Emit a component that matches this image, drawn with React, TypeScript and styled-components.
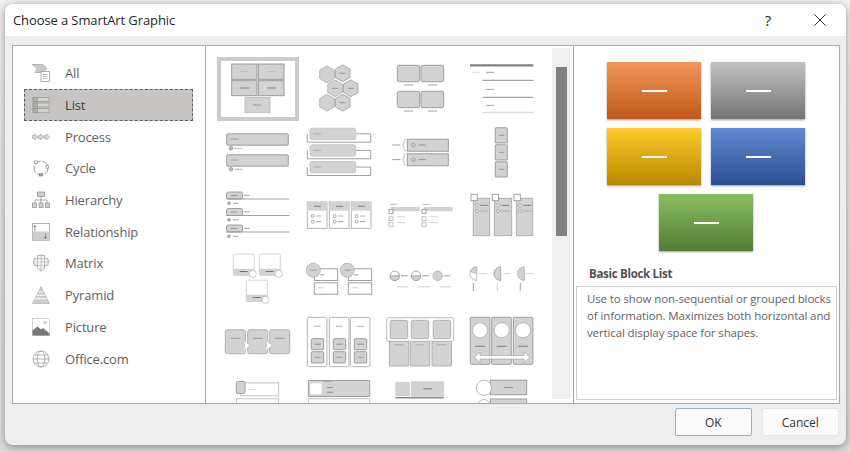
import React from 'react';
import styled, { createGlobalStyle } from 'styled-components';

const FONT = `"Open Sans", "Noto Sans", "Liberation Sans", sans-serif`;
const FILL = '#d2d2d2';
const LINE = '#949494';
const SOFT = '#cccccc';

const GlobalStyle = createGlobalStyle`
  html, body { margin: 0; padding: 0; height: 100%; background: #e6e6e6; }
  #root { height: 100%; }
`;

const Page = styled.div`
  box-sizing: border-box;
  width: 850px;
  height: 452px;
  padding: 4px 4px 7px 5px;
  overflow: hidden;
  background: linear-gradient(#f0f0f0, #dcdcdc);
  font-family: ${FONT};
`;

const Dialog = styled.div`
  display: flex;
  flex-direction: column;
  height: 100%;
  border-radius: 8px;
  background: #eeeeee;
  box-shadow: 0 2px 8px rgba(0, 0, 0, 0.4);
  overflow: hidden;
`;

const TitleBar = styled.div`
  flex: none;
  display: flex;
  align-items: center;
  height: 32px;
  padding-left: 8px;
  background: #ffffff;
`;

const Title = styled.div`
  flex: 1;
  font-size: 13px;
  letter-spacing: -0.1px;
  color: #262626;
`;

const TitleButton = styled.div`
  display: flex;
  align-items: center;
  justify-content: center;
  width: 26px;
  height: 32px;
  margin-right: 26px;
  font-size: 15px;
  color: #262626;
  &:last-child { margin-right: 13px; }
`;

const Panels = styled.div`
  flex: none;
  display: flex;
  box-sizing: border-box;
  height: 359px;
  margin: 9px 6px 0 7px;
  border: 1px solid #a9a9ad;
  background: #ffffff;
`;

const Sidebar = styled.div`
  flex: none;
  box-sizing: border-box;
  width: 193px;
  padding: 11.5px 12px 0 11px;
  border-right: 1px solid #a9a9ad;
`;

const Category = styled.div<{ $active?: boolean }>`
  display: flex;
  align-items: center;
  box-sizing: border-box;
  height: 31.7px;
  padding-left: 7px;
  gap: 15px;
  font-size: 13px;
  letter-spacing: -0.15px;
  color: ${(p) => (p.$active ? '#404040' : '#606060')};
  background: ${(p) => (p.$active ? '#c6c5c3' : 'transparent')};
  border: 1px dashed ${(p) => (p.$active ? '#5f5f5f' : 'transparent')};
`;

const Gallery = styled.div`
  flex: none;
  display: flex;
  box-sizing: border-box;
  width: 368px;
  border-right: 1px solid #a9a9ad;
`;

const GridClip = styled.div`
  flex: 1;
  overflow: hidden;
  padding: 11px 0 0 11px;
`;

const ThumbGrid = styled.div`
  display: grid;
  grid-template-columns: repeat(4, 81px);
  grid-auto-rows: 63.5px;
`;

const Thumb = styled.svg<{ $selected?: boolean }>`
  display: block;
  width: 82px;
  height: 63.5px;
  box-sizing: border-box;
  ${(p) => p.$selected && 'outline: 4px solid #cfcbc8; outline-offset: -4px;'}
`;

const ScrollTrack = styled.div`
  flex: none;
  width: 19px;
  margin: 2px 2px 4px 0;
  background: #f0f0f0;
`;

const ScrollThumb = styled.div`
  width: 11px;
  height: 169px;
  margin: 19px 0 0 4px;
  background: #808080;
`;

const Detail = styled.div`
  flex: 1;
  display: flex;
  flex-direction: column;
  min-width: 0;
`;

const Preview = styled.div`
  flex: none;
  display: flex;
  flex-wrap: wrap;
  justify-content: center;
  gap: 9px 10px;
  width: 198px;
  margin: 16px 0 0 33px;
`;

const PreviewBlock = styled.div<{ $from: string; $to: string }>`
  display: flex;
  align-items: center;
  justify-content: center;
  width: 94px;
  height: 57px;
  background: linear-gradient(${(p) => p.$from}, ${(p) => p.$to});
  box-shadow: 0 1px 2px rgba(0, 0, 0, 0.4);
  &::after {
    content: '';
    width: 25px;
    height: 2px;
    background: #ffffff;
  }
`;

const DetailTitle = styled.div`
  flex: none;
  display: flex;
  align-items: center;
  box-sizing: border-box;
  height: 35px;
  padding: 9px 0 0 15px;
  font-size: 11.5px;
  font-weight: 700;
  letter-spacing: -0.3px;
  color: #505050;
`;

const DetailText = styled.div`
  flex: 1;
  margin: 0 2px 3px 2px;
  padding: 3px 4px 0 10px;
  border: 1px solid #d0d0d0;
  font-size: 11.5px;
  line-height: 17px;
  letter-spacing: -0.12px;
  color: #636363;
`;

const Footer = styled.div`
  flex: 1;
  display: flex;
  justify-content: flex-end;
  gap: 10.5px;
  padding: 4px 7.5px 0 0;
`;

const Button = styled.div<{ $primary?: boolean }>`
  display: flex;
  align-items: center;
  justify-content: center;
  box-sizing: border-box;
  width: 76.5px;
  height: 28px;
  border-radius: 2px;
  font-size: 12px;
  color: #303030;
  background: #fbfbfb;
  border: 1px solid ${(p) => (p.$primary ? '#8fb3c9' : '#e6e6e6')};
`;

/* small drawing helpers for the thumbnails */
const Box = ({ x, y, x2, y2, r = 0, fill = FILL, stroke = LINE }: any) => (
  <rect x={x} y={y} width={x2 - x} height={y2 - y} rx={r} fill={fill} stroke={stroke} strokeWidth={0.9} />
);
const Dash = ({ x, x2, y, c = LINE, w = 0.9 }: any) => <line x1={x} x2={x2} y1={y} y2={y} stroke={c} strokeWidth={w} />;
const Dot = ({ x, y, r = 1.8, fill = '#fff', stroke = LINE }: any) => (
  <circle cx={x} cy={y} r={r} fill={fill} stroke={stroke} strokeWidth={0.8} />
);
const hexPoints = (cx: number, cy: number, r: number) =>
  [0, 60, 120, 180, 240, 300]
    .map((a) => {
      const t = ((a + 30) * Math.PI) / 180;
      return `${cx + r * Math.cos(t)},${cy + r * Math.sin(t)}`;
    })
    .join(' ');

const thumbs: React.ReactNode[] = [
  // row 1
  <>
    <Box x={14.7} y={7} x2={40} y2={22.3} />
    <Box x={41.3} y={7} x2={67} y2={22.3} />
    <Box x={14.7} y={23.7} x2={40} y2={38.7} />
    <Box x={41.3} y={23.7} x2={67} y2={38.7} />
    <Box x={28} y={40.3} x2={53} y2={55.7} stroke="#bbb" />
    <Dash x={23} x2={32} y={14.5} c="#bbb" />
    <Dash x={50} x2={59} y={14.5} c="#bbb" />
    <Dash x={23} x2={32} y={31} c="#777" />
    <Dash x={50} x2={59} y={31} c="#777" />
    <Dash x={36} x2={45} y={48} c="#999" />
  </>,
  <>
    {[[29, 17.3], [44.7, 16.3], [37, 31.3], [52.7, 31.3], [29, 45.7], [44.7, 45.7]].map(([cx, cy], i) => (
      <polygon key={i} points={hexPoints(cx, cy, 8.4)} fill={FILL} stroke={i % 2 ? '#999' : '#aaa'} strokeWidth={0.8} />
    ))}
    <Dash x={41.5} x2={47.5} y={16.3} />
    <Dash x={34} x2={40} y={31.3} />
    <Dash x={50} x2={56} y={31.3} />
    <Dash x={41.5} x2={47.5} y={45.7} />
  </>,
  <>
    {[8.3, 34.3].map((y) => (
      <React.Fragment key={y}>
        <Box x={18.3} y={y} x2={40.7} y2={y + 16.4} r={2} />
        <Box x={42} y={y} x2={64.7} y2={y + 16.4} r={2} />
        <Dash x={25} x2={34} y={y + 19.7} />
        <Dash x={49} x2={58} y={y + 19.7} />
      </React.Fragment>
    ))}
  </>,
  <>
    <Dash x={10} x2={73.3} y={8.3} w={2.2} c="#808080" />
    <Dash x={12.3} x2={20} y={15.3} c="#ddd" />
    <Dash x={26} x2={34} y={15.3} />
    <Dash x={22.7} x2={73.3} y={23.3} c="#808080" />
    <Dash x={26} x2={34} y={32.3} />
    <Dash x={22.7} x2={73.3} y={40.3} c="#808080" />
    <Dash x={26} x2={34} y={48.3} />
    <Dash x={22.7} x2={73.3} y={55.3} c={SOFT} />
  </>,
  // row 2
  <>
    {[12.8, 33.8].map((y) => (
      <React.Fragment key={y}>
        <Box x={9.7} y={y} x2={71.3} y2={y + 11.4} r={1} />
        <Dash x={13.5} x2={21.5} y={y + 5.3} c="#999" />
        <Dot x={14} y={y + 14.5} fill="#bbb" />
        <Dash x={17.3} x2={25.3} y={y + 14.5} c="#aaa" />
      </React.Fragment>
    ))}
  </>,
  <>
    {[7.2, 23.8, 40.5].map((y) => (
      <React.Fragment key={y}>
        <path d={`M9.3 ${y + 5.6}V${y + 14}H72.7V${y + 5.6}H57`} fill="#fff" stroke={LINE} strokeWidth={0.9} />
        <Box x={12} y={y} x2={57.7} y2={y + 11.3} r={2} stroke="#c4c4c4" />
        <Dash x={15} x2={23} y={y + 5.6} c="#aaa" />
      </React.Fragment>
    ))}
  </>,
  <>
    {[18.2, 32.8].map((y) => (
      <React.Fragment key={y}>
        <Dash x={13.3} x2={21.3} y={y + 5.8} />
        <path d={`M27 ${y}q-2 0 -2 2v2.5l-1.5 1.3l1.5 1.3v2.5q0 2 2 2`} fill="none" stroke="#aaa" strokeWidth={0.8} />
        <Box x={28.3} y={y} x2={69.3} y2={y + 12} />
        <Dot x={34.3} y={y + 5.8} fill={FILL} />
        <Dash x={39.3} x2={46.7} y={y + 5.8} />
      </React.Fragment>
    ))}
  </>,
  <>
    {[6.8, 23.8, 40.8].map((y) => (
      <React.Fragment key={y}>
        <Box x={35.3} y={y} x2={47.3} y2={y + 15.2} r={0.5} />
        <Dash x={38.5} x2={44.5} y={y + 7.5} />
      </React.Fragment>
    ))}
  </>,
  // row 3
  <>
    {[8, 24.5, 41].map((y) => (
      <React.Fragment key={y}>
        <Box x={9.5} y={y} x2={25.7} y2={y + 7} r={2} />
        <Dash x={13.5} x2={21} y={y + 3.5} />
        <Dash x={27.3} x2={32.7} y={y + 3.3} />
        <Dash x={9} x2={72.3} y={y + 7} c="#999" />
        <Dot x={12} y={y + 11.3} fill="#aaa" stroke="#aaa" r={1.5} />
        <Dash x={16} x2={21.3} y={y + 11.3} />
      </React.Fragment>
    ))}
  </>,
  <>
    {[9.3, 31.3, 53.3].map((x) => (
      <React.Fragment key={x}>
        <Box x={x} y={18} x2={x + 19.7} y2={44.3} fill="#fff" stroke="#aaa" />
        <rect x={x} y={18} width={19.7} height={8.7} fill={FILL} />
        <Dash x={x + 6.7} x2={x + 13.7} y={22.3} c="#777" />
        <Dot x={x + 5.4} y={32} r={1.5} fill="#fff" />
        <Dot x={x + 5.4} y={37.7} r={1.5} fill="#fff" />
        <Dash x={x + 8.7} x2={x + 14} y={32} c="#aaa" />
        <Dash x={x + 8.7} x2={x + 14} y={37.7} />
      </React.Fragment>
    ))}
  </>,
  <>
    {[0, 33].map((o) => (
      <React.Fragment key={o}>
        <Dash x={10.7 + o} x2={17.7 + o} y={20.3} c="#aaa" />
        <rect x={12 + o} y={23} width={28.7} height={4.3} fill={FILL} />
        <Box x={10 + o} y={25.3} x2={14 + o} y2={29.3} fill="#fff" />
        <Box x={10 + o} y={32.7} x2={14 + o} y2={36.7} fill="#fff" stroke="#bbb" />
        <Box x={10 + o} y={38.7} x2={14 + o} y2={42.7} fill="#fff" stroke="#bbb" />
        <Dash x={18 + o} x2={26 + o} y={32.7} c={SOFT} />
        <Dash x={18 + o} x2={26 + o} y={38.7} c={SOFT} />
      </React.Fragment>
    ))}
  </>,
  <>
    {[[13.3, 29.7, 11], [34.3, 51.7, 32.3], [56.3, 72.7, 54]].map(([x, x2, s]) => (
      <React.Fragment key={x}>
        <Box x={x} y={14.3} x2={x2} y2={51.7} stroke="#aaa" />
        <Box x={s} y={10.3} x2={s + 6.3} y2={16.7} fill="#fff" stroke="#999" />
        <Dot x={x + 3.7} y={21.3} r={1.5} />
        <Dot x={x + 3.7} y={27} r={1.5} />
        <Dash x={x + 7} x2={x + 15} y={21.3} c="#777" />
        <Dash x={x + 7} x2={x + 15} y={27} c="#aaa" />
      </React.Fragment>
    ))}
  </>,
  // row 4
  <>
    {[[16.3, 6.2], [42.3, 6.2], [29.3, 32.2]].map(([x, y]) => (
      <React.Fragment key={x}>
        <rect x={x} y={y} width={21} height={21.3} rx={1} fill="#fff" stroke="#ccc" strokeWidth={0.8} />
        <rect x={x} y={y + 14.6} width={21} height={6.7} fill={FILL} />
        <Dash x={x + 6.4} x2={x + 14.4} y={y + 17.3} c="#666" />
        <Dot x={x + 19.4} y={y + 19.6} r={3.6} stroke="#bbb" />
      </React.Fragment>
    ))}
  </>,
  <>
    {[16.3, 50.3].map((x) => (
      <React.Fragment key={x}>
        <Box x={x} y={20.8} x2={x + 23.4} y2={32.5} fill="#fff" />
        <Box x={x} y={34.8} x2={x + 23.4} y2={46.2} fill="#fff" />
        <Dot x={x - 1} y={22.2} r={7} fill={FILL} stroke="#aaa" />
        <Dash x={x - 4} x2={x + 2.5} y={22.2} c="#999" />
        <Dash x={x + 5.7} x2={x + 10} y={26.8} />
        <Dash x={x + 4} x2={x + 10} y={39.8} c={SOFT} />
      </React.Fragment>
    ))}
  </>,
  <>
    <Dot x={15.7} y={27.8} r={4.7} />
    <path d="M11 27.8h9.4a4.7 4.7 0 0 1 -9.4 0z" fill={FILL} stroke={LINE} strokeWidth={0.7} />
    <Dash x={22} x2={28.7} y={27.8} />
    <Dot x={37} y={27.8} r={4.7} />
    <path d="M32.3 27.8h9.4a4.7 4.7 0 0 1 -9.4 0z" fill={FILL} stroke={LINE} strokeWidth={0.7} />
    <Dash x={43.3} x2={50} y={27.8} />
    <Dot x={58.7} y={27.8} r={4.7} fill={FILL} stroke="#aaa" />
    <Dash x={64.7} x2={71.3} y={27.8} />
    <Dash x={18} x2={29.3} y={38.8} c={SOFT} />
    <Dash x={39.3} x2={50.7} y={38.8} c={SOFT} />
    <Dash x={61} x2={72} y={38.8} c={SOFT} />
  </>,
  <>
    <path d="M16.7 18.9a6.8 6.8 0 0 0 0 13.6z" fill="#fff" stroke="#aaa" strokeWidth={0.8} />
    <path d="M16.7 18.9a6.8 6.8 0 0 0 -6.4 4.6l6.4 2.2z" fill={FILL} stroke="#aaa" strokeWidth={0.6} />
    <path d="M40.7 18.9a6.8 6.8 0 0 0 0 13.6z" fill={FILL} stroke="#999" strokeWidth={0.8} />
    <path d="M64.3 18.9a6.8 6.8 0 0 0 0 13.6z" fill={FILL} stroke="#aaa" strokeWidth={0.8} />
    <Dash x={19} x2={27} y={25.7} c={SOFT} />
    <Dash x={43} x2={50.3} y={25.7} c={SOFT} />
    <Dash x={66.3} x2={74} y={25.7} c={SOFT} />
    <line x1={13.3} x2={13.3} y1={34.8} y2={43.2} stroke="#999" strokeWidth={0.9} />
    <line x1={37.3} x2={37.3} y1={34.8} y2={43.2} stroke={SOFT} strokeWidth={0.9} />
    <line x1={60.3} x2={60.3} y1={34.8} y2={43.2} stroke="#999" strokeWidth={0.9} />
  </>,
  // row 5
  <>
    {[8.3, 30.7, 52.7].map((x) => (
      <React.Fragment key={x}>
        <Box x={x} y={18.7} x2={x + 20} y2={42.7} r={2} stroke="#aaa" />
        <Dash x={x + 5.4} x2={x + 15} y={27.3} />
      </React.Fragment>
    ))}
    <polygon points="26.3,29 33,34.5 26.3,40 28,34.5" fill="#fff" stroke="#bbb" strokeWidth={0.5} />
    <polygon points="48.3,29 55,34.5 48.3,40 50,34.5" fill="#fff" stroke="#bbb" strokeWidth={0.5} />
  </>,
  <>
    {[9.3, 31.3, 52.3].map((x) => (
      <React.Fragment key={x}>
        <Box x={x} y={6.3} x2={x + 19.6} y2={55.7} r={1.5} fill="#fff" stroke="#aaa" />
        <Dash x={x + 6.7} x2={x + 13.4} y={15.3} c="#aaa" />
        <Box x={x + 4} y={27.7} x2={x + 16.4} y2={38.7} r={1} />
        <Box x={x + 4} y={40.7} x2={x + 16.4} y2={52} r={1} />
        <Dash x={x + 7} x2={x + 13.4} y={33.2} c="#888" />
        <Dash x={x + 7} x2={x + 13.4} y={46.3} />
      </React.Fragment>
    ))}
  </>,
  <>
    {[10.3, 31.3, 53].map((x) => (
      <React.Fragment key={x}>
        <Box x={x} y={30.2} x2={x + 19.5} y2={55} r={1} stroke="#aaa" />
        <Dash x={x + 5} x2={x + 14} y={33.8} c="#aaa" />
      </React.Fragment>
    ))}
    <rect x={7.7} y={6.7} width={67} height={23.6} rx={1.5} fill="#fff" stroke="#aaa" strokeWidth={0.8} />
    <Box x={11.3} y={9.3} x2={28.7} y2={27.7} r={2} stroke="#aaa" />
    <Box x={32.3} y={9.3} x2={49.7} y2={27.7} r={2} stroke="#aaa" />
    <Box x={54.3} y={9.3} x2={71.7} y2={27.7} r={2} stroke="#aaa" />
  </>,
  <>
    {[[10.3, 20], [31.7, 41.7], [53.3, 63]].map(([x, cx]) => (
      <React.Fragment key={x}>
        <Box x={x} y={6.3} x2={x + 19.6} y2={53.3} r={1} />
        <Dot x={cx} y={19.3} r={7.6} stroke="#aaa" />
        <Dash x={cx - 5} x2={cx + 5} y={35.3} c="#777" />
      </React.Fragment>
    ))}
    <polygon
      points="14.3,46.3 20,41 20,44.5 64,44.5 64,41 70,46.3 64,51.5 64,48 20,48 20,51.5"
      fill="#fff"
      stroke="#999"
      strokeWidth={0.6}
    />
  </>,
  // row 6, cut off by the panel
  <>
    <Box x={23.7} y={7.8} x2={61.7} y2={20.8} fill="#fff" stroke="#bbb" />
    <Box x={19.3} y={6.5} x2={28} y2={18.5} r={1.5} />
    <Dash x={30.7} x2={38.7} y={14.5} c="#ddd" />
    <Box x={19.3} y={23.8} x2={61.7} y2={34} fill="#fff" stroke="#bbb" />
  </>,
  <>
    <Box x={10.3} y={5.5} x2={71.7} y2={21.5} r={0.5} />
    <rect x={12.3} y={8.2} width={11.4} height={11} rx={1.5} fill="#fff" />
    <Dash x={26} x2={34} y={6.5} c="#999" w={0.6} />
    <Dash x={29} x2={35} y={12.5} c="#777" w={0.7} />
    <Dash x={29} x2={35} y={17.3} c="#777" w={0.7} />
    <Box x={10.3} y={23.8} x2={71.7} y2={34} fill="#fff" stroke="#bbb" />
  </>,
  <>
    <rect x={16.3} y={6.8} width={14.7} height={14.4} fill={FILL} />
    <Box x={32.3} y={6.8} x2={64.7} y2={21.2} stroke={FILL} />
    <Dash x={44.3} x2={53.3} y={13.8} c="#777" />
    <Dash x={16.3} x2={64.7} y={22.7} c="#888" w={1.5} />
  </>,
  <>
    <Box x={30.3} y={5.2} x2={66.7} y2={19.8} />
    <Dot x={24} y={12.8} r={7.6} stroke="#aaa" />
    <Dash x={44} x2={53} y={12.5} c="#888" />
    <Box x={30.3} y={24} x2={66.7} y2={34} />
    <Dot x={24} y={31} r={6.5} stroke="#aaa" />
  </>,
];

/* sidebar icons */
const IconSvg = styled.svg`
  flex: none;
  width: 18px;
  height: 18px;
`;

const icons: Record<string, React.ReactNode> = {
  All: (
    <>
      <path d="M0 .5h11l4 4-4 4H3l2.5-4z" fill="#c9c9c9" stroke="#999" strokeWidth={0.6} />
      <rect x={9} y={7.5} width={8.5} height={10} fill="#fff" stroke="#8c8c8c" strokeWidth={0.7} />
      <path d="M11 10.5h4.5M11 12.5h4.5M11 14.5h4.5" stroke="#999" strokeWidth={0.7} />
    </>
  ),
  List: (
    <>
      {[1.5, 7, 12.5].map((y) => (
        <React.Fragment key={y}>
          <rect x={1} y={y} width={16} height={4} fill="#d4d3d1" stroke="#959595" strokeWidth={0.7} />
          <rect x={1} y={y} width={4.5} height={4} fill="#b0b0ae" stroke="#959595" strokeWidth={0.7} />
        </React.Fragment>
      ))}
    </>
  ),
  Process: (
    <>
      {[0, 6, 12].map((x) => (
        <path
          key={x}
          d={`M${x} 7.7h2.5v-1.7l3 3-3 3v-1.7h-2.5z`}
          fill="#dcdcdc"
          stroke="#909090"
          strokeWidth={0.6}
        />
      ))}
    </>
  ),
  Cycle: (
    <>
      <circle cx={9} cy={9} r={7} fill="none" stroke="#8a8a8a" strokeWidth={0.9} strokeDasharray="7 1.5" />
      <rect x={2.5} y={2} width={3} height={2.6} fill="#fff" stroke="#8a8a8a" strokeWidth={0.7} />
      <rect x={14} y={6.5} width={2.6} height={2.6} fill="#fff" stroke="#8a8a8a" strokeWidth={0.7} />
      <rect x={7.5} y={14.6} width={3} height={2.4} fill="#a0a0a0" stroke="#8a8a8a" strokeWidth={0.7} />
    </>
  ),
  Hierarchy: (
    <>
      <rect x={5.5} y={1} width={7} height={4.5} fill="#cfcfcf" stroke="#8a8a8a" strokeWidth={0.7} />
      <path d="M9 5.5v3.5M3 12V9h12v3M9 9v3" fill="none" stroke="#8a8a8a" strokeWidth={0.7} />
      {[0.5, 7, 13.5].map((x) => (
        <rect key={x} x={x} y={12} width={4} height={4.5} fill="#cfcfcf" stroke="#8a8a8a" strokeWidth={0.7} />
      ))}
    </>
  ),
  Relationship: (
    <>
      <rect x={0.5} y={0.5} width={17} height={17} fill="#fff" stroke="#999" strokeWidth={0.7} />
      <path d="M0.5 8.5H17.5V17.5H0.5z" fill="#cdcdcd" />
      <path d="M2.8 8V2.5M1.3 4l1.5-1.5L4.3 4" fill="none" stroke="#777" strokeWidth={0.8} />
      <path d="M13.5 10.5v5M12 14l1.5 1.5 1.5-1.5" fill="none" stroke="#777" strokeWidth={0.8} />
    </>
  ),
  Matrix: (
    <>
      <path
        d="M5.5 1.7q3.5-1.4 7 0v3h3.3q1.4 3.3 0 6.6h-3.3v3L9 17l-3.5-2.7v-3H2.2q-1.4-3.3 0-6.6h3.3z"
        fill="#f6f6f6"
        stroke="#9a9a9a"
        strokeWidth={0.8}
      />
      <path d="M9 1v15M1.5 8h15M5.5 4.7v6.6M12.5 4.7v6.6M5.5 4.7h7M5.5 11.3h7" fill="none" stroke="#a8a8a8" strokeWidth={0.6} />
    </>
  ),
  Pyramid: (
    <>
      <path d="M9 .5L17.5 17.5H.5z" fill="#cdcdcd" stroke="#a0a0a0" strokeWidth={0.5} />
      <path d="M6.5 6h5M4.7 9.3h8.6M3 12.8h12" stroke="#fff" strokeWidth={0.9} />
    </>
  ),
  Picture: (
    <>
      <rect x={0.5} y={0.5} width={17} height={17} fill="#fff" stroke="#c4c4c4" strokeWidth={0.7} />
      <path d="M.5 17.5v-5l5-4 3.5 3 2-1.5 6.5 5.5v2z" fill="#777" />
      <circle cx={13} cy={4.5} r={1.6} fill="#c4c4c4" />
    </>
  ),
  'Office.com': (
    <>
      <circle cx={9} cy={9} r={8} fill="none" stroke="#969696" strokeWidth={0.7} />
      <ellipse cx={9} cy={9} rx={3.8} ry={8} fill="none" stroke="#969696" strokeWidth={0.7} />
      <path d="M1 9h16M2.2 5h13.6M2.2 13h13.6" stroke="#969696" strokeWidth={0.7} />
    </>
  ),
};

const categories = Object.keys(icons);

const blocks = [
  ['#f2965c', '#bf5916'],
  ['#c2c2c2', '#747474'],
  ['#ffca2c', '#b78900'],
  ['#6389d2', '#2b4f92'],
  ['#89be63', '#547c35'],
];

export default function App() {
  return (
    <>
      <GlobalStyle />
      <Page>
        <Dialog>
          <TitleBar>
            <Title>Choose a SmartArt Graphic</Title>
            <TitleButton>?</TitleButton>
            <TitleButton>
              <svg width="12" height="12" viewBox="0 0 12 12">
                <path d="M.5.5l11 11M11.5.5l-11 11" stroke="#262626" strokeWidth="1" fill="none" />
              </svg>
            </TitleButton>
          </TitleBar>
          <Panels>
            <Sidebar>
              {categories.map((name) => (
                <Category key={name} $active={name === 'List'}>
                  <IconSvg viewBox="0 0 18 18">{icons[name]}</IconSvg>
                  {name}
                </Category>
              ))}
            </Sidebar>
            <Gallery>
              <GridClip>
                <ThumbGrid>
                  {thumbs.map((t, i) => (
                    <Thumb key={i} viewBox="0 0 82 63.5" $selected={i === 0}>
                      {t}
                    </Thumb>
                  ))}
                </ThumbGrid>
              </GridClip>
              <ScrollTrack>
                <ScrollThumb />
              </ScrollTrack>
            </Gallery>
            <Detail>
              <Preview>
                {blocks.map(([from, to]) => (
                  <PreviewBlock key={from} $from={from} $to={to} />
                ))}
              </Preview>
              <DetailTitle>Basic Block List</DetailTitle>
              <DetailText>
                Use to show non-sequential or grouped blocks of information. Maximizes both horizontal and vertical
                display space for shapes.
              </DetailText>
            </Detail>
          </Panels>
          <Footer>
            <Button $primary>OK</Button>
            <Button>Cancel</Button>
          </Footer>
        </Dialog>
      </Page>
    </>
  );
}
